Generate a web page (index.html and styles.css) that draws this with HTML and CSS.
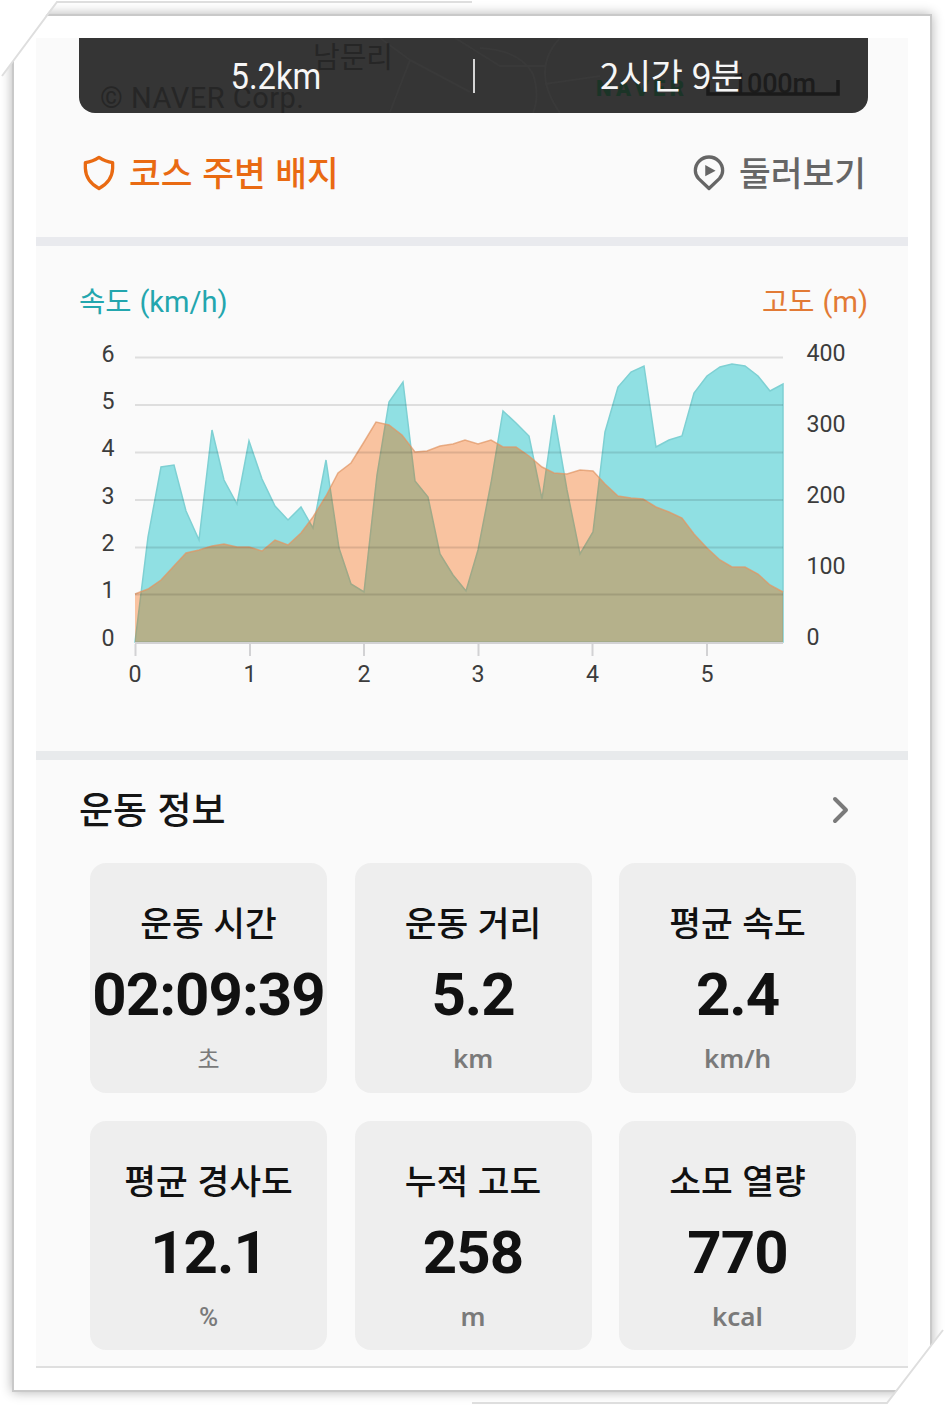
FILE: index.html
```html
<!DOCTYPE html>
<html lang="ko">
<head>
<meta charset="utf-8">
<title>운동 정보</title>
<link rel="stylesheet" href="styles.css">
</head>
<body>
<div class="page">
  <div class="paper"></div>
  <svg class="corners" viewBox="0 0 945 1407" aria-hidden="true">
    <path class="corner-mask" d="M0 0H57L2 76H0Z M945 1328L887 1404V1407H945Z"/>
    <path class="corner-line" d="M2 76L57 2H472 M943 1330L887 1403H472"/>
  </svg>
  <main class="screen">
    <header class="summary">
      <svg class="map" viewBox="79 38 789 75" aria-hidden="true">
        <path class="road" d="M380 38L410 60L390 112 M410 60L470 92 M455 38L500 66H545 M480 48Q520 50 533 74Q540 96 533 113 M545 84L600 76 M560 38Q530 70 560 113"/>
        <text class="ghost place" x="313" y="68">남문리</text>
        <text class="ghost copy" x="100" y="108" textLength="204">© NAVER Corp.</text>
        <text class="ghost naver" x="596" y="96" textLength="88">NAVER</text>
        <text class="ghost scale" x="732" y="93" textLength="84">1000m</text>
        <path class="rule" d="M708 80V94H838V80"/>
      </svg>
      <span class="cell"><span class="narrow">5.2km</span></span>
      <i class="bar"></i>
      <span class="cell">2시간 9분</span>
    </header>
    <nav class="links">
      <a class="badge">
        <svg class="shield" viewBox="0 0 34 38"><path d="M17 2.500Q23.500 7 31.500 8V14Q31 28 17 35.500Q3 28 2.500 14V8Q10.500 7 17 2.500Z"/></svg>
        <span class="label">코스 주변 배지</span>
      </a>
      <a class="look">
        <svg class="pin" viewBox="0 0 34 38"><path class="outline" d="M17 35.500L6 25Q2.500 21 2.500 16.500A14.500 14.500 0 0 1 31.500 16.500Q31.500 21 28 25Z"/><path class="play" d="M13 10.500L24 16.500L13 22.500Z"/></svg>
        <span class="label">둘러보기</span>
      </a>
    </nav>
    <section class="graph">
      <div class="legend"><span class="speed">속도 <span class="unit">(km/h)</span></span><span class="height">고도 <span class="unit">(m)</span></span></div>
      <svg class="chart" viewBox="79 330 789 370">
        <defs>
          <clipPath id="under"><path d="M135 642V594L148 589L161 580L173 567L186 553L199 550L212 546L224 544L237 547L249 547L262 551L275 540L288 545L301 533L313 517L326 496L338 473L351 463L364 442L376 422L389 425L402 435L415 452L427 451L440 446L453 444L465 440L478 444L491 440L503 447L516 447L529 456L542 467L554 473L567 474L580 470L593 471L605 484L618 496L631 498L643 499L656 507L669 512L682 518L694 534L707 548L720 560L732 567L745 567L758 574L770 585L783 592V642Z"/></clipPath>
        </defs>
        <path class="area-speed" d="M135 642L148 537L161 467L174 465L186 511L199 540L212 430L224 480L237 504L249 441L262 479L275 506L288 520L301 507L313 528L326 460L339 548L351 584L364 592L377 475L389 402L403 382L415 481L428 497L440 554L453 575L466 591L478 550L491 483L503 411L516 423L529 436L542 499L554 415L567 490L580 554L593 532L605 432L618 387L631 372L644 366L656 447L669 440L682 436L694 393L707 376L720 367L732 364L745 366L758 376L770 391L783 384V642Z"/>
        <path class="area-height" d="M135 642V594L148 589L161 580L173 567L186 553L199 550L212 546L224 544L237 547L249 547L262 551L275 540L288 545L301 533L313 517L326 496L338 473L351 463L364 442L376 422L389 425L402 435L415 452L427 451L440 446L453 444L465 440L478 444L491 440L503 447L516 447L529 456L542 467L554 473L567 474L580 470L593 471L605 484L618 496L631 498L643 499L656 507L669 512L682 518L694 534L707 548L720 560L732 567L745 567L758 574L770 585L783 592V642Z"/>
        <path class="area-both" clip-path="url(#under)" d="M135 642L148 537L161 467L174 465L186 511L199 540L212 430L224 480L237 504L249 441L262 479L275 506L288 520L301 507L313 528L326 460L339 548L351 584L364 592L377 475L389 402L403 382L415 481L428 497L440 554L453 575L466 591L478 550L491 483L503 411L516 423L529 436L542 499L554 415L567 490L580 554L593 532L605 432L618 387L631 372L644 366L656 447L669 440L682 436L694 393L707 376L720 367L732 364L745 366L758 376L770 391L783 384V642Z"/>
        <path class="edge-height" d="M135 594L148 589L161 580L173 567L186 553L199 550L212 546L224 544L237 547L249 547L262 551L275 540L288 545L301 533L313 517L326 496L338 473L351 463L364 442L376 422L389 425L402 435L415 452L427 451L440 446L453 444L465 440L478 444L491 440L503 447L516 447L529 456L542 467L554 473L567 474L580 470L593 471L605 484L618 496L631 498L643 499L656 507L669 512L682 518L694 534L707 548L720 560L732 567L745 567L758 574L770 585L783 592"/>
        <path class="grid" d="M135 357.500H783M135 405H783M135 452.500H783M135 500H783M135 547.500H783M135 594.500H783"/>
        <path class="axis" d="M135 643H783M135.500 644V656M250 644V656M364 644V656M478.500 644V656M592.500 644V656M707 644V656"/>
        <g class="num end"><text x="114.500" y="361.500">6</text><text x="114.500" y="409">5</text><text x="114.500" y="456">4</text><text x="114.500" y="503.500">3</text><text x="114.500" y="551">2</text><text x="114.500" y="598">1</text><text x="114.500" y="645.500">0</text></g>
        <g class="num"><text x="806.500" y="361">400</text><text x="806.500" y="432">300</text><text x="806.500" y="503">200</text><text x="806.500" y="574">100</text><text x="806.500" y="645">0</text></g>
        <g class="num mid"><text x="135" y="681.500">0</text><text x="250" y="681.500">1</text><text x="364" y="681.500">2</text><text x="478" y="681.500">3</text><text x="592.500" y="681.500">4</text><text x="707" y="681.500">5</text></g>
      </svg>
    </section>
    <section class="info">
      <div class="heading"><h2>운동 정보</h2><svg class="chevron" viewBox="0 0 18 28"><path d="M3 3L14 14L3 25"/></svg></div>
      <div class="cards">
        <div class="card"><h3>운동 시간</h3><strong>02:09:39</strong><small class="kr">초</small></div>
        <div class="card"><h3>운동 거리</h3><strong>5.2</strong><small>km</small></div>
        <div class="card"><h3>평균 속도</h3><strong>2.4</strong><small>km/h</small></div>
        <div class="card"><h3>평균 경사도</h3><strong>12.1</strong><small class="percent">%</small></div>
        <div class="card"><h3>누적 고도</h3><strong>258</strong><small>m</small></div>
        <div class="card"><h3>소모 열량</h3><strong>770</strong><small>kcal</small></div>
      </div>
    </section>
  </main>
</div>
</body>
</html>
```
FILE: styles.css
```css
* { box-sizing: border-box; }
body { margin: 0; background: #fff; font-family: "Noto Sans CJK KR", sans-serif; }
h2, h3 { margin: 0; font-weight: 500; }
.page { position: relative; width: 945px; height: 1407px; padding: 38px 37px 0 36px; overflow: hidden; }

/* paper sheet with clipped corners behind the screen */
.paper { position: absolute; inset: 14px 13px 15px 12px; border: 2px solid #c9c9c9; background: #fff; box-shadow: 0 0 11px rgba(0, 0, 0, .3); }
.corners { position: absolute; left: 0; top: 0; width: 945px; height: 1407px; }
.corner-mask { fill: #fff; }
.corner-line { fill: none; stroke: #dedede; stroke-width: 2; }

.screen { position: relative; display: flex; flex-direction: column; width: 872px; height: 1330px; background: #fafafa; border-bottom: 2px solid #dfdfdf; }

.summary { position: relative; display: grid; grid-template-columns: 1fr 2px 1fr; align-items: center; height: 75px; margin: 0 40px 0 43px; border-radius: 0 0 16px 16px; background: #353535; color: #f6f6f6; font-size: 35px; line-height: 74px; overflow: hidden; }
.map { position: absolute; inset: 0; width: 100%; height: 100%; }
.road { fill: none; stroke: #393939; stroke-width: 2; }
.ghost { fill: #262626; }
.place { font-size: 29px; }
.copy { font: 29px Roboto, sans-serif; }
.naver { font: 900 22px Roboto, sans-serif; fill: #1b3427; }
.scale { font: 500 27px Roboto, sans-serif; fill: #1c1c1c; }
.rule { fill: none; stroke: #1a1a1a; stroke-width: 3.500; }
.cell { position: relative; height: 75px; padding-bottom: 1px; line-height: 72px; text-align: center; letter-spacing: -.5px; }
.narrow { display: inline-block; font: 36px/72px Roboto, sans-serif; letter-spacing: 0; transform: scaleX(.91); }
.bar { position: relative; width: 2px; height: 34px; background: #d5d5d5; }

.links { display: flex; justify-content: space-between; align-items: center; height: 124px; padding: 0 42px 4px 47px; font-size: 34.500px; font-weight: 500; }
.links a { display: flex; align-items: center; gap: 14px; white-space: nowrap; }
.label { line-height: 51px; padding-bottom: 4px; }
.badge { color: #e96a12; }
.look { color: #666; }
.look .label { -webkit-text-stroke: 0; }
.shield, .pin { width: 32px; height: 38px; }
.shield path, .outline { fill: none; stroke: currentColor; stroke-width: 3.500; stroke-linejoin: round; }
.play { fill: currentColor; }

.graph { height: 523px; border-top: 9px solid #e9eaee; border-bottom: 9px solid #e8eaec; padding: 33px 40px 0 43px; }
.legend { display: flex; justify-content: space-between; height: 42px; font-size: 28.500px; line-height: 41px; }
.unit { font: 29px/41px Roboto, sans-serif; }
.speed { color: #23a6ae; }
.height { color: #e27a35; }
.chart { display: block; width: 789px; height: 370px; margin-top: 9px; }
.area-speed { fill: #90e0e3; stroke: #7ed0d3; stroke-width: 1.500; }
.area-height { fill: #f9c3a0; }
.area-both { fill: #b5b18b; stroke: #9fa988; stroke-width: 1.500; }
.edge-height { fill: none; stroke: #df9462; stroke-opacity: .7; stroke-width: 1.500; }
.grid { stroke: #000; stroke-opacity: .11; stroke-width: 2; }
.axis { fill: none; stroke: #d2d2d4; stroke-width: 2; }
.num { font: 23.200px Roboto, sans-serif; fill: #3c3c3c; }
.end { text-anchor: end; }
.mid { text-anchor: middle; }

.info { padding: 0 53px 0 54px; }
.heading { display: flex; justify-content: space-between; align-items: center; height: 103px; margin-left: -11px; padding: 0 5px 4px 0; color: #151515; }
.heading h2 { padding-bottom: 3px; font-size: 37px; }
.chevron { width: 18px; height: 28px; }
.chevron path { fill: none; stroke: #7a7a7a; stroke-width: 4; stroke-linecap: round; stroke-linejoin: round; }
.cards { display: grid; grid-template-columns: repeat(3, 237px); column-gap: 27.500px; row-gap: 28px; }
.card { display: flex; flex-direction: column; align-items: center; height: 229.500px; padding-top: 32px; border-radius: 16px; background: #eee; color: #111; white-space: nowrap; }
.card h3 { height: 54px; font-size: 34.500px; line-height: 52px; }
.card strong { height: 91px; font: 700 60px/92px Roboto, sans-serif; letter-spacing: -1px; }
.card small { height: 36px; font: 600 26px/36px "Noto Sans", sans-serif; color: #7a7a7a; }
.card .kr { font: 400 24px/36px "Noto Sans CJK KR", sans-serif; }
.card .percent { font: 500 26px/38px Roboto, sans-serif; }
```
